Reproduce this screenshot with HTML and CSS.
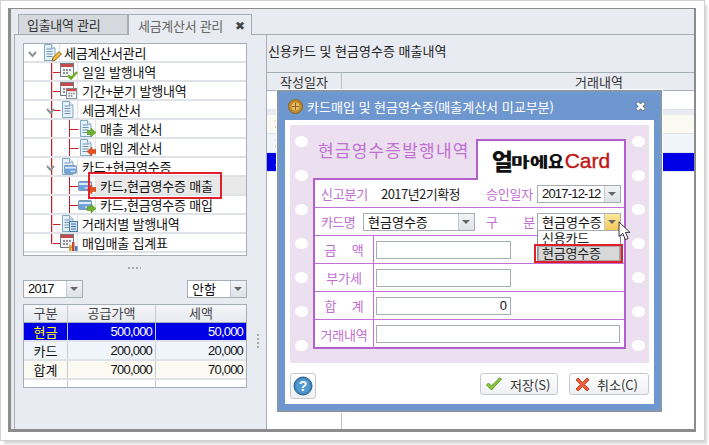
FILE: index.html
```html
<!DOCTYPE html>
<html lang="ko">
<head>
<meta charset="utf-8">
<title>세금계산서 관리</title>
<link rel="stylesheet" href="styles.css">
</head>
<body>
<svg class="defs" width="0" height="0">
  <defs>
    <symbol id="doc" viewBox="0 0 17 17"><path d="M2.500 .5h7l3.500 3.500v12.500h-10.500z" fill="#e8f1f8" stroke="#7fa8c4"/><path d="M4.500 5h6M4.500 7.500h6M4.500 10h6M4.500 12.500h6" stroke="#6d93b5"/><path d="M9.500 .5v3.500h3.500" fill="#fff" stroke="#7fa8c4"/></symbol>
    <symbol id="cal" viewBox="0 0 17 17"><rect x=".5" y=".5" width="13" height="13" fill="#f4f4f4" stroke="#6f7c88"/><rect x="1" y="1" width="12" height="3" fill="#c84a4a"/><path d="M3 6h2v2h-2zM6 6h2v2h-2zM9 6h2v2h-2zM3 9h2v2h-2zM6 9h2v2h-2z" fill="#8b949c"/></symbol>
    <symbol id="card" viewBox="0 0 14 10"><rect x=".5" y=".5" width="13" height="9" rx="1" fill="#6fa3de" stroke="#7b95ad"/><rect x="1" y="2" width="12" height="2" fill="#dceafa"/><path d="M7 7h5" stroke="#fff"/></symbol>
    <symbol id="arrow-g" viewBox="0 0 9 9"><path d="M0 2.500h4v-2.500l5 4.500-5 4.500v-2.500h-4z" fill="#6fb02c" stroke="#4e8a1a" stroke-width=".5"/></symbol>
    <symbol id="arrow-r" viewBox="0 0 9 9"><path d="M9 2.500h-4v-2.500l-5 4.500 5 4.500v-2.500h4z" fill="#e2541e" stroke="#b83a10" stroke-width=".5"/></symbol>
  </defs>
</svg>
<div class="sheet-page">
  <div class="frame">
    <div class="tabs">
      <div class="tab">입출내역 관리</div>
      <div class="tab tab-on">세금계산서 관리<span class="tab-x">✖</span></div>
    </div>
    <div class="panel">
      <aside class="left">
        <div class="tree">
          <svg class="tree-lines" width="80" height="213">
            <path d="M27.500 19v181M27.500 28.500h9M27.500 47.500h9M27.500 66.500h9M27.500 180.500h9M27.500 199.500h9M45.500 76v38M45.500 85.500h9M45.500 104.500h9M45.500 133v38M45.500 142.500h9M45.500 161.500h9" fill="none" stroke="#c81e28"/>
            <path d="M28.500 19v181" stroke="#f4c8cc"/>
            <path d="M5 8l3.500 4 3.500-4M23 65l3.500 4 3.500-4M23 122l3.500 4 3.500-4" fill="none" stroke="#8d9398" stroke-width="2"/>
          </svg>
          <div class="node l0"><span class="ico"><svg width="17" height="17"><use href="#doc"/></svg><svg class="pencil" width="11" height="11" viewBox="0 0 11 11"><path d="M1 10l1-3.500 6-6 2.500 2.500-6 6z" fill="#f0b93a" stroke="#8a6a20"/></svg></span><span class="lab">세금계산서관리</span></div>
          <div class="node l1"><span class="ico"><svg width="17" height="17"><use href="#cal"/></svg><svg class="badge" width="11" height="9" viewBox="0 0 11 9"><path d="M1 4.500l3 3 6-6.500" fill="none" stroke="#6fae22" stroke-width="2.500"/></svg></span><span class="lab">일일 발행내역</span></div>
          <div class="node l1"><span class="ico"><svg width="17" height="17"><use href="#cal"/></svg><svg class="badge cal2" width="11" height="11" viewBox="0 0 14 14"><use href="#cal" width="17" height="17"/></svg></span><span class="lab">기간+분기 발행내역</span></div>
          <div class="node l1"><span class="ico"><svg width="17" height="17"><use href="#doc"/></svg></span><span class="lab">세금계산서</span></div>
          <div class="node l2"><span class="ico"><svg width="17" height="17"><use href="#doc"/></svg><svg class="badge" width="9" height="9"><use href="#arrow-g"/></svg></span><span class="lab">매출 계산서</span></div>
          <div class="node l2"><span class="ico"><svg width="17" height="17"><use href="#doc"/></svg><svg class="badge" width="9" height="9"><use href="#arrow-r"/></svg></span><span class="lab">매입 계산서</span></div>
          <div class="node l1"><span class="ico"><svg width="17" height="17"><use href="#doc"/></svg><svg class="badge card-on-doc" width="13" height="9"><use href="#card"/></svg></span><span class="lab">카드+현금영수증</span></div>
          <div class="node l2 node-on"><span class="ico"><svg width="14" height="10"><use href="#card"/></svg><svg class="badge" width="9" height="9"><use href="#arrow-r"/></svg></span><span class="lab">카드,현금영수증 매출</span></div>
          <div class="node l2"><span class="ico"><svg width="14" height="10"><use href="#card"/></svg><svg class="badge" width="9" height="9"><use href="#arrow-g"/></svg></span><span class="lab">카드,현금영수증 매입</span></div>
          <div class="node l1"><span class="ico"><svg width="17" height="17"><use href="#doc"/></svg><svg class="badge" width="9" height="11" viewBox="0 0 9 11"><rect x=".5" y=".5" width="8" height="10" fill="#cfe2f4" stroke="#4a7aa8"/><path d="M2 3h5M2 5.500h5M2 8h5" stroke="#3f6e9c"/></svg></span><span class="lab">거래처별 발행내역</span></div>
          <div class="node l1"><span class="ico"><svg width="17" height="17"><use href="#cal"/></svg><svg class="badge" width="9" height="9" viewBox="0 0 9 9"><path d="M0 3h2.500v6h-2.500z" fill="#d8a020"/><path d="M3 0h2.500v9h-2.500z" fill="#c8483a"/><path d="M6 4h2.500v5h-2.500z" fill="#4a80c0"/></svg></span><span class="lab">매입매출 집계표</span></div>
          <div class="red-mark tree-mark"></div>
        </div>
        <div class="dots-h"></div>
        <div class="filters">
          <div class="combo c-year"><span class="combo-v num">2017</span><span class="combo-b"></span></div>
          <div class="combo c-opt"><span class="combo-v">안함</span><span class="combo-b"></span></div>
        </div>
        <div class="sum">
          <div class="sum-row sum-head"><span>구분</span><span>공급가액</span><span>세액</span></div>
          <div class="sum-row sum-on"><span>현금</span><span class="num">500,000</span><span class="num">50,000</span></div>
          <div class="sum-row sum-alt"><span>카드</span><span class="num">200,000</span><span class="num">20,000</span></div>
          <div class="sum-row sum-tot"><span>합계</span><span class="num">700,000</span><span class="num">70,000</span></div>
          <div class="sum-row sum-end"><span></span><span></span><span></span></div>
        </div>
      </aside>
      <div class="dots-v"></div>
      <main class="right">
        <h1 class="r-title">신용카드 및 현금영수증 매출내역</h1>
        <div class="list">
          <div class="list-row list-head"><span>작성일자</span><span>거래내역</span></div>
          <div class="list-row list-filter"><span>작</span><span></span></div>
          <div class="list-gap"></div>
          <div class="list-row list-cream"><span class="num">2017-12-01</span><span></span></div>
          <div class="list-row list-pale"><span class="num">2017-12-05</span><span></span></div>
          <div class="list-row list-on"><span class="num">2017-12-12</span><span></span></div>
          <div class="list-row list-rest"><span></span><span></span></div>
        </div>
      </main>
    </div>
  </div>

  <section class="dlg">
    <header class="dlg-bar">
      <svg class="dlg-ico" width="15" height="15" viewBox="0 0 15 15"><circle cx="7.500" cy="7.500" r="7" fill="#c08a2c" stroke="#8a6420"/><circle cx="7.500" cy="7.500" r="4" fill="#e6bc62"/><path d="M4 7.500h7M7.500 4v7" stroke="#8a6420"/></svg>
      <span class="dlg-title">카드매입 및 현금영수증(매출계산서 미교부분)</span>
      <span class="dlg-x">✖</span>
    </header>
    <div class="dlg-body">
      <div class="paper">
        <div class="holes holes-l"><i></i><i></i><i></i><i></i><i></i><i></i><i></i></div>
        <div class="holes holes-r"><i></i><i></i><i></i><i></i><i></i><i></i><i></i></div>
        <div class="p-head">
          <div class="p-title">현금영수증발행내역</div>
          <div class="logo"><span class="lg-k"><b class="big">얼</b><b class="sm">마에</b><b class="mid">요</b></span><span class="lg-c">Card</span></div>
        </div>
        <div class="p-table">
          <div class="f-row f-top">
            <span class="f-lab f-w1">신고분기</span><span class="f-val">2017년2기확정</span>
            <span class="f-lab f-w2">승인일자</span>
            <div class="combo f-combo"><span class="combo-v num">2017-12-12</span><span class="combo-b"></span></div>
          </div>
          <div class="f-row f-top">
            <span class="f-lab f-w1b">카드명</span>
            <div class="combo f-card"><span class="combo-v">현금영수증</span><span class="combo-b"></span></div>
            <span class="f-lab f-w2 f-sp">구 분</span>
            <div class="combo f-combo combo-hot"><span class="combo-v">현금영수증</span><span class="combo-b"></span></div>
          </div>
          <div class="f-row f-num"><span class="f-head f-sp2">금 액</span><span class="inp inp-m"></span></div>
          <div class="f-row f-num"><span class="f-head">부가세</span><span class="inp inp-m"></span></div>
          <div class="f-row f-num"><span class="f-head f-sp2">합 계</span><span class="inp inp-m inp-r">0</span></div>
          <div class="f-row f-num f-last"><span class="f-head">거래내역</span><span class="inp inp-l"></span></div>
        </div>
        <div class="drop"><div class="drop-i">신용카드</div><div class="drop-i drop-on">현금영수증</div></div>
        <div class="red-mark drop-mark"></div>
        <svg class="cursor" width="13" height="20" viewBox="0 0 14 22"><path d="M1 1v16l4-3.500 3 7 3-1.300-3-6.700h5z" fill="#fff" stroke="#222"/></svg>
      </div>
      <div class="dlg-foot">
        <button class="btn btn-help"><svg width="20" height="20" viewBox="0 0 20 20"><circle cx="10" cy="10" r="9" fill="#3f86bd" stroke="#2b5f8e"/><circle cx="10" cy="10" r="7" fill="#4f9ad0"/><text x="10" y="15" text-anchor="middle" class="help-q">?</text></svg></button>
        <button class="btn btn-save"><svg width="18" height="15" viewBox="0 0 18 15"><path d="M1.500 8l5 5 10-11-2-1-8 8-3-3z" fill="#8cc63f" stroke="#5f9a22"/></svg><span>저장(S)</span></button>
        <button class="btn btn-cancel"><svg width="15" height="15" viewBox="0 0 15 15"><path d="M1 3l2-2 4.500 4.500 4.500-4.500 2 2-4.500 4.500 4.500 4.500-2 2-4.500-4.500-4.500 4.500-2-2 4.500-4.500z" fill="#f0603c" stroke="#c8401e"/></svg><span>취소(C)</span></button>
      </div>
    </div>
  </section>
</div>
</body>
</html>
```

FILE: styles.css
```css
* { box-sizing: border-box; }
html, body { margin: 0; padding: 0; height: 100%; background: #fff; overflow: hidden; }
body { font: 13px/1 "Noto Sans CJK KR", "Liberation Sans", sans-serif; color: #111; }
.defs { position: absolute; }
.num { font-family: "Liberation Sans", sans-serif; letter-spacing: -.8px; }
.sheet-page {
  position: relative; width: 703px; height: 439px; padding: 7px 0 0 7px; margin: 1px 0 0 1px;
  background: #fff; box-shadow: 0 0 0 1px #d0d0d0, 3px 4px 2px #d8d8d8;
}
.frame {
  width: 688px; height: 424px; display: flex; flex-direction: column;
  background: #e8ebf1; border: solid #8c8c8c; border-width: 1px 2px 3px 3px;
  padding-left: 3px; box-shadow: inset 1px 0 0 #e4e4e4;
}
.tabs { display: flex; align-items: flex-end; height: 25px; padding-left: 4px; flex: none; }
.tab {
  width: 110px; height: 20px; background: #d5d9de; border: 1px solid #a5adb5; border-bottom: 0;
  display: flex; align-items: center; padding-left: 8px; color: #333; letter-spacing: -.3px;
}
.tab-on { width: 124px; height: 21px; background: #e8ebf1; color: #666; margin-bottom: -1px; position: relative; z-index: 1; padding-left: 9px; letter-spacing: -.3px; }
.tab-x { font-size: 12px; margin-left: 12px; color: #444; }
.panel { flex: 1; display: flex; border: solid #a5adb5; border-width: 1px 0 0 1px; min-height: 0; }
.left { width: 251px; flex: none; padding: 8px 0 0 8px; }
.tree { position: relative; width: 224px; height: 213px; background: #fff; border: 1px solid #a5adb5; overflow: hidden; }
.tree-lines { position: absolute; left: 0; top: 0; }
.node { display: flex; height: 19px; align-items: center; position: relative; border-bottom: 2px solid #dfe2e6; }
.l0 { padding-left: 18px; }
.l1 { padding-left: 36px; }
.l2 { padding-left: 54px; }
.ico { position: relative; width: 17px; height: 17px; flex: none; display: flex; align-items: center; }
.ico svg { display: block; }
.badge { position: absolute; right: -1px; bottom: 0; }
.cal2 { right: 0; }
.card-on-doc { right: 0; bottom: 1px; }
.pencil { position: absolute; right: -3px; bottom: -1px; }
.lab { flex: 1; height: 100%; padding-left: 4px; background: #fff; border-left: 1px solid #dfe2e6; line-height: 17px; letter-spacing: -.2px; white-space: nowrap; }
.node-on .lab { background: #e9e9e9; }
.red-mark { position: absolute; border: 2px solid #e01f2b; pointer-events: none; }
.tree-mark { left: 64px; top: 128px; width: 134px; height: 27px; }
.dots-h { width: 13px; height: 2px; margin: 11px 0 11px 105px; background: repeating-linear-gradient(90deg, #a8a8a8 0 2px, transparent 2px 4px); }
.filters { display: flex; justify-content: space-between; width: 224px; }
.combo { display: flex; height: 18px; background: #fff; border: 1px solid #a5adb5; }
.combo-v { flex: 1; line-height: 16px; padding-left: 4px; white-space: nowrap; }
.combo-b { width: 16px; flex: none; position: relative; background: linear-gradient(#f2f4f6, #dde2e8); border-left: 1px solid #c3c9d0; }
.combo-b::after { content: ""; position: absolute; left: 3px; top: 6px; border: 4px solid transparent; border-top: 4px solid #666; border-bottom: 0; }
.c-year, .c-opt { width: 60px; }
.sum { width: 224px; margin-top: 6px; border: 1px solid #a5adb5; }
.sum-row { display: grid; grid-template-columns: 44px 88px 1fr; height: 19px; border-bottom: 2px solid #dfe2e6; }
.sum-row span { line-height: 17px; padding: 0 3px; text-align: right; border-right: 1px solid #c5cad0; white-space: nowrap; }
.sum-row span:first-child { text-align: center; padding: 0; }
.sum-row span:last-child { border-right: 0; }
.sum-head { height: 18px; background: linear-gradient(#f4f6f8, #e6e9ee); border-bottom: 1px solid #a5adb5; color: #444; }
.sum-head span, .sum-head span:last-child { text-align: center; padding: 0; line-height: 16px; }
.sum-on { background: #0000e6; color: #fff; }
.sum-on span:first-child { color: #ff0; }
.sum-alt { background: #f0f4fb; }
.sum-tot { background: #fafaf2; }
.sum-end { height: 7px; border-bottom: 0; background: #fff; }
.dots-v { width: 2px; height: 14px; margin: 299px 0 0 -9px; background: repeating-linear-gradient(#a8a8a8 0 2px, transparent 2px 4px); flex: none; }
.right { flex: 1; margin-left: 7px; min-width: 0; display: flex; flex-direction: column; border-left: 1px solid #a5adb5; }
.r-title { margin: 0; height: 37px; font-weight: 400; font-size: 13px; line-height: 31px; padding-left: 1px; color: #222; }
.list { flex: 1; display: flex; flex-direction: column; background: #fff; border-top: 1px solid #a5adb5; }
.list-row { display: grid; grid-template-columns: 75px 1fr; height: 19px; flex: none; border-bottom: 1px solid #dfe2e6; }
.list-row span { line-height: 18px; padding-left: 8px; white-space: nowrap; overflow: hidden; }
.list-row span:first-child { border-right: 1px solid #b8bec6; }
.list-head { background: #e8ebf1; border-bottom: 1px solid #a5adb5; color: #333; height: 18px; }
.list-head span { line-height: 17px; }
.list-head span:first-child { padding: 0; text-align: center; }
.list-head span:last-child { padding-left: 233px; }
.list-filter { color: #bbb; }
.list-gap { height: 5px; flex: none; background: #e8ebf1; }
.list-cream { background: #fafaf2; }
.list-pale { background: #f0f4fb; }
.list-on { background: #0000e6; color: #fff; }
.list-rest { flex: 1; border: 0; }
.dlg {
  position: absolute; left: 276px; top: 89px; width: 385px; height: 322px;
  border: 1px solid #8a929a; outline: 1px solid #fff; background: #6f97cf;
  padding: 0 7px 7px; display: flex; flex-direction: column;
  box-shadow: inset 0 0 0 1px #7f9bbe;
}
.dlg-bar { height: 29px; display: flex; align-items: center; flex: none; color: #fff; }
.dlg-ico { margin: 2px 0 0 3px; }
.dlg-title { margin-left: 4px; padding-top: 1px; flex: 1; white-space: nowrap; }
.dlg-x { font-size: 13px; color: #fff; margin-right: 8px; text-shadow: 0 0 1px #222, 0 0 1px #222; }
.dlg-body { flex: 1; background: #fff; padding: 5px 5px 0; display: flex; flex-direction: column; }
.paper { position: relative; height: 238px; background: #ece0f0; padding: 14px 23px 0 23px; flex: none; }
.holes { position: absolute; top: 11px; width: 13px; display: flex; flex-direction: column; gap: 23px; }
.holes i { display: block; width: 13px; height: 11px; border-radius: 50%; background: #fff; }
.holes-l { left: 5px; }
.holes-r { right: 4px; }
.p-head { display: flex; height: 41px; }
.p-title { flex: 1; border-bottom: 2px solid #b45fce; color: #c06fd2; font-size: 17px; letter-spacing: 1.2px; padding: 2px 0 0 5px; white-space: nowrap; }
.logo { width: 150px; flex: none; background: #fff; border: solid #b45fce; border-width: 2px 2px 0; display: flex; align-items: center; justify-content: center; }
.lg-k { color: #111; display: flex; align-items: center; }
.lg-k b { font-weight: 900; display: block; }
.big { font-size: 23px; letter-spacing: -2px; }
.sm { font-size: 14px; width: 37px; transform: scaleX(1.45); transform-origin: left center; letter-spacing: 0; white-space: nowrap; }
.mid { font-size: 17px; margin-right: 1px; }
.lg-c { font: 400 21px/1 "Liberation Sans", sans-serif; color: #c01818; -webkit-text-stroke: .4px #c01818; }
.p-table { width: 313px; height: 169px; background: #fff; border: solid #b45fce; border-width: 0 2px 2px; }
.f-row { display: flex; align-items: center; border-bottom: 1px solid #c070d6; }
.f-top { height: 28px; }
.f-num { height: 28px; }
.f-last { border-bottom: 0; }
.f-lab { color: #c06fd2; white-space: nowrap; letter-spacing: -.2px; }
.f-w1 { margin-left: 6px; width: 60px; }
.f-val { width: 105px; letter-spacing: -.55px; color: #222; }
.f-w2 { width: 51px; }
.f-w1b { margin-left: 6px; width: 42px; letter-spacing: -.6px; }
.f-sp { word-spacing: 22px; margin-left: 11px; }
.f-combo { width: 84px; }
.f-card { width: 112px; }
.combo-hot .combo-b { background: linear-gradient(#fde79a, #f6c75a); }
.f-head {
  width: 59px; height: 100%; flex: none; border-right: 1px solid #c070d6; color: #c06fd2;
  display: flex; align-items: center; justify-content: center; letter-spacing: -.2px;
}
.f-sp2 { word-spacing: 12px; }
.inp { display: block; height: 18px; border: 1px solid #a5adb5; background: #fff; margin-left: 2px; line-height: 16px; padding: 0 3px; text-align: right; font-family: "Liberation Sans", sans-serif; }
.inp-m { width: 135px; }
.inp-l { width: 244px; }
.drop { position: absolute; left: 247px; top: 106px; width: 84px; height: 30px; background: #fff; border: 1px solid #8a929a; border-top: 0; }
.drop-i { height: 15px; line-height: 14px; padding-left: 4px; letter-spacing: -.2px; color: #222; }
.drop-on { background: #d8d8d8; box-shadow: inset 0 0 0 1px #a8a8a8; }
.drop-mark { left: 244px; top: 119px; width: 89px; height: 19px; }
.cursor { position: absolute; left: 328px; top: 96px; }
.dlg-foot { flex: 1; display: flex; align-items: flex-start; padding-top: 10px; }
.btn { border: 1px solid #c5cad0; border-radius: 3px; background: linear-gradient(#fff, #eef0f3); display: flex; align-items: center; padding: 0; font: 13px "Noto Sans CJK KR", sans-serif; color: #333; }
.btn-help { width: 26px; height: 26px; justify-content: center; margin-right: auto; }
.btn-save { width: 78px; height: 22px; padding-left: 4px; gap: 7px; margin-right: 11px; }
.btn-cancel { width: 80px; height: 22px; padding-left: 5px; gap: 7px; }
.help-q { fill: #fff; font: 700 14px "Liberation Sans", sans-serif; }
```
